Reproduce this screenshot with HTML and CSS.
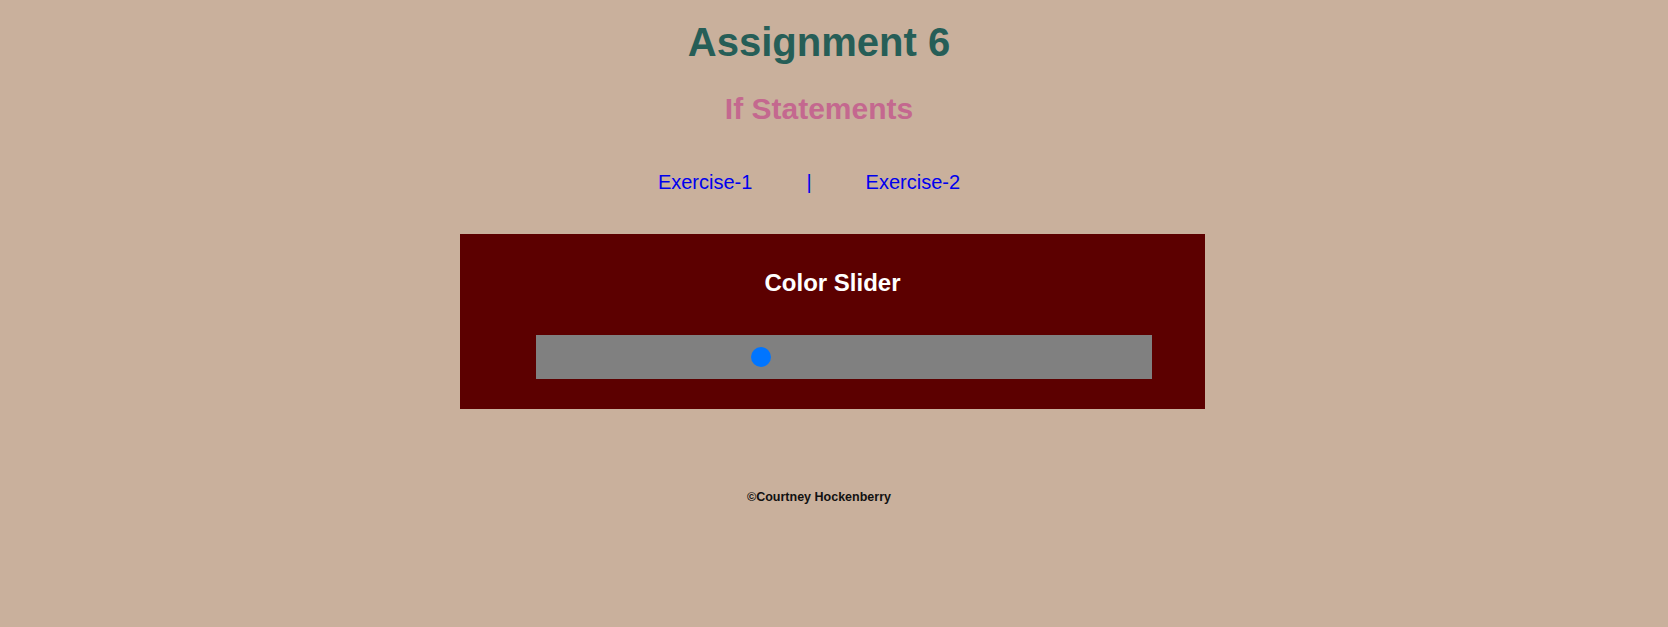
FILE: index.html
```html
<!DOCTYPE html>
<html lang="en">
<head>
<meta charset="utf-8">
<title>Assignment 6</title>
<link rel="stylesheet" href="styles.css">
</head>
<body>
<header class="page-header">
  <h1 class="title">Assignment 6</h1>
  <h2 class="subtitle">If Statements</h2>
</header>
<nav class="nav">
  <a class="nav-link" href="#">Exercise-1</a>
  <span class="nav-sep">|</span>
  <a class="nav-link" href="#">Exercise-2</a>
</nav>
<main class="main">
  <section class="slider-box">
    <h3 class="slider-title">Color Slider</h3>
    <div class="slider-row">
      <input class="slider" type="range" min="0" max="255" value="92">
    </div>
  </section>
</main>
<footer class="footer">©Courtney Hockenberry</footer>
</body>
</html>
```

FILE: styles.css
```css
html, body {
  margin: 0;
  padding: 0;
}
body {
  background: #c9b09c;
  font-family: "Liberation Sans", Arial, sans-serif;
  min-height: 627px;
}
.page-header {
  padding: 19px 30px 0 0;
  text-align: center;
}
.title {
  margin: 0;
  font-size: 40px;
  line-height: 46px;
  font-weight: bold;
  color: #265e57;
}
.subtitle {
  margin: 27px 0 0 0;
  font-size: 30px;
  line-height: 34px;
  font-weight: bold;
  color: #c4688f;
}
.nav {
  display: flex;
  justify-content: center;
  align-items: baseline;
  gap: 54px;
  margin-top: 45px;
  padding-right: 50px;
  font-size: 20px;
  line-height: 23px;
  color: #0000ee;
}
.nav-link {
  color: #0000ee;
  text-decoration: none;
}
.nav-sep {
  color: #0000ee;
}
.main {
  display: flex;
  justify-content: center;
  margin-top: 40px;
  padding-right: 3px;
}
.slider-box {
  width: 745px;
  box-sizing: border-box;
  background: #5c0000;
  padding: 35px 0 30px 0;
}
.slider-title {
  margin: 0;
  font-size: 24px;
  line-height: 28px;
  font-weight: bold;
  color: #ffffff;
  text-align: center;
}
.slider-row {
  margin-top: 38px;
  padding: 0 53px 0 76px;
  display: flex;
}
.slider {
  -webkit-appearance: none;
  appearance: none;
  margin: 0;
  width: 616px;
  height: 44px;
  background: #808080;
  outline: none;
  border: none;
  display: block;
}
.slider::-webkit-slider-thumb {
  -webkit-appearance: none;
  appearance: none;
  width: 20px;
  height: 20px;
  border-radius: 50%;
  background: #0075ff;
  border: none;
  cursor: pointer;
}
.footer {
  margin-top: 81px;
  padding-right: 30px;
  text-align: center;
  font-size: 12.5px;
  line-height: 15px;
  font-weight: bold;
  color: #111111;
}
```
